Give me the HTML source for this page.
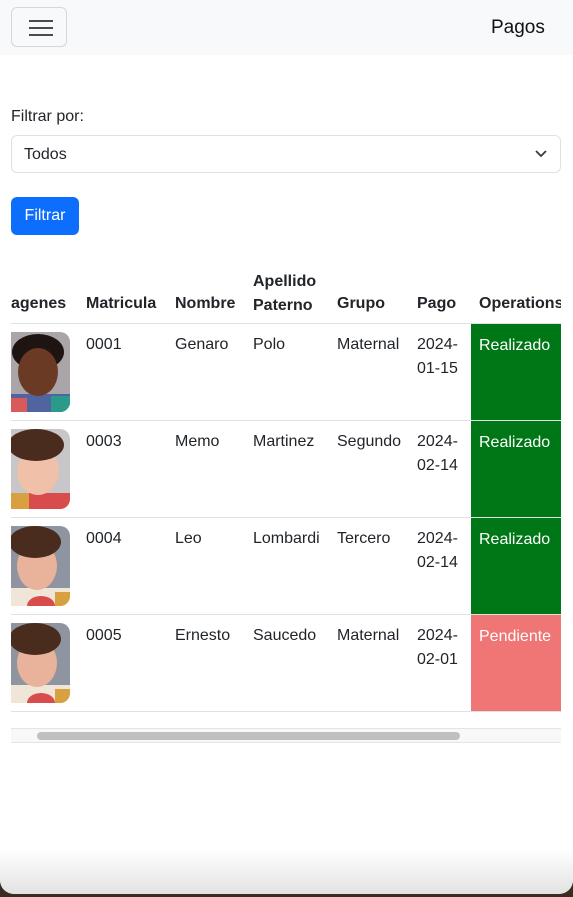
<!DOCTYPE html>
<html><head><meta charset="utf-8"><style>
*{margin:0;padding:0;box-sizing:border-box}
html,body{width:573px;height:897px;overflow:hidden;background:#3a2c22}
body{font-family:"Liberation Sans",Arial,sans-serif;color:#212529;font-size:16px}
#page{position:absolute;left:0;top:0;width:573px;height:894px;background:#fff;border-radius:0 0 14px 14px;overflow:hidden}
#shade{position:absolute;left:0;top:850px;width:573px;height:44px;background:linear-gradient(#fff,#e2e2e2)}
.a{position:absolute;white-space:nowrap}
.nav{position:absolute;left:0;top:0;width:573px;height:55px;background:#f8f9fa}
.tog{position:absolute;left:11px;top:7px;width:56px;height:40px;border:1px solid #d6d7d8;border-radius:6px}
.tog i{position:absolute;left:17px;width:24px;height:2px;background:#4a4a4a}
.sel{position:absolute;left:11px;top:135px;width:550px;height:38px;border:1px solid #dee2e6;border-radius:6px}
.btn{position:absolute;left:11px;top:197px;width:68px;height:38px;background:#0d6efd;border-radius:6px;color:#fff;text-align:center;line-height:38px}
.th{font-weight:bold}
.hl{position:absolute;left:11px;width:550px;height:1px;background:#dee2e6}
.st{position:absolute;left:471px;width:90px;color:#fff;padding:13px 0 0 8px}
.img{position:absolute;left:11px;width:59px;height:80px;border-radius:0 10px 10px 0;overflow:hidden}
.d{line-height:24px}
</style></head><body><div id="page">
<div class="nav"><div class="tog"><i style="top:12px"></i><i style="top:19px"></i><i style="top:26px"></i></div>
<div class="a" style="left:491px;top:17px;font-size:19px;color:#111">Pagos</div></div>
<div class="a" style="left:11px;top:108px;font-size:16px">Filtrar por:</div>
<div class="sel"><div class="a" style="left:12px;top:10px">Todos</div>
<svg class="a" style="left:522px;top:13px" width="14" height="10" viewBox="0 0 14 10"><path d="M2 2l5 5 5-5" fill="none" stroke="#343a40" stroke-width="1.8"/></svg></div>
<div class="btn">Filtrar</div>

<div class="a th" style="left:11px;top:295px">agenes</div>
<div class="a th" style="left:86px;top:295px">Matricula</div>
<div class="a th" style="left:175px;top:295px">Nombre</div>
<div class="a th" style="left:253px;top:270px;line-height:24px">Apellido<br>Paterno</div>
<div class="a th" style="left:337px;top:295px">Grupo</div>
<div class="a th" style="left:417px;top:295px">Pago</div>
<div class="a th" style="left:479px;top:295px;width:82px;overflow:hidden">Operations</div>
<div class="hl" style="top:323px"></div>

<div class="st" style="top:324px;height:96px;background:#007717">Realizado</div>
<div class="st" style="top:421px;height:96px;background:#007717">Realizado</div>
<div class="st" style="top:518px;height:96px;background:#007717">Realizado</div>
<div class="st" style="top:615px;height:96px;background:#f07575">Pendiente</div>
<div class="hl" style="top:420px"></div><div class="hl" style="top:517px"></div><div class="hl" style="top:614px"></div><div class="hl" style="top:711px"></div>

<div class="img" style="top:332px"><svg width="59" height="80"><rect width="59" height="80" fill="#a9a5a8"/><rect y="62" width="59" height="18" fill="#5064a0"/><rect x="40" y="64" width="19" height="16" fill="#2a9a8a"/><rect y="66" width="16" height="14" fill="#d85a5a"/><ellipse cx="27" cy="20" rx="26" ry="18" fill="#1e1512"/><ellipse cx="27" cy="40" rx="20" ry="24" fill="#6b3a25"/></svg></div>
<div class="img" style="top:429px"><svg width="59" height="80"><rect width="59" height="80" fill="#c8c6c9"/><rect y="64" width="59" height="16" fill="#d84c4c"/><rect y="64" width="18" height="16" fill="#d8a040"/><ellipse cx="27" cy="42" rx="21" ry="24" fill="#f0c0a8"/><ellipse cx="25" cy="16" rx="28" ry="16" fill="#4a2c1e"/></svg></div>
<div class="img" style="top:526px"><svg width="59" height="80"><rect width="59" height="80" fill="#8f95a0"/><rect y="62" width="59" height="18" fill="#efe6d8"/><ellipse cx="30" cy="80" rx="14" ry="10" fill="#d84c4c"/><rect x="44" y="66" width="15" height="14" fill="#d8a040"/><ellipse cx="26" cy="40" rx="20" ry="24" fill="#e8b39a"/><ellipse cx="24" cy="16" rx="26" ry="16" fill="#4a2c1e"/></svg></div>
<div class="img" style="top:623px"><svg width="59" height="80"><rect width="59" height="80" fill="#8f95a0"/><rect y="62" width="59" height="18" fill="#efe6d8"/><ellipse cx="30" cy="80" rx="14" ry="10" fill="#d84c4c"/><rect x="44" y="66" width="15" height="14" fill="#d8a040"/><ellipse cx="26" cy="40" rx="20" ry="24" fill="#e8b39a"/><ellipse cx="24" cy="16" rx="26" ry="16" fill="#4a2c1e"/></svg></div>

<div class="a" style="left:86px;top:336px">0001</div><div class="a" style="left:175px;top:336px">Genaro</div><div class="a" style="left:253px;top:336px">Polo</div><div class="a" style="left:337px;top:336px">Maternal</div><div class="a d" style="left:417px;top:333px">2024-<br>01-15</div>
<div class="a" style="left:86px;top:433px">0003</div><div class="a" style="left:175px;top:433px">Memo</div><div class="a" style="left:253px;top:433px">Martinez</div><div class="a" style="left:337px;top:433px">Segundo</div><div class="a d" style="left:417px;top:430px">2024-<br>02-14</div>
<div class="a" style="left:86px;top:530px">0004</div><div class="a" style="left:175px;top:530px">Leo</div><div class="a" style="left:253px;top:530px">Lombardi</div><div class="a" style="left:337px;top:530px">Tercero</div><div class="a d" style="left:417px;top:527px">2024-<br>02-14</div>
<div class="a" style="left:86px;top:627px">0005</div><div class="a" style="left:175px;top:627px">Ernesto</div><div class="a" style="left:253px;top:627px">Saucedo</div><div class="a" style="left:337px;top:627px">Maternal</div><div class="a d" style="left:417px;top:624px">2024-<br>02-01</div>

<div class="a" style="left:11px;top:728px;width:550px;height:15px;background:#f8f8f8;border-top:1px solid #e4e4e4;border-bottom:1px solid #e4e4e4"></div>
<div class="a" style="left:37px;top:732px;width:423px;height:8px;background:#c0c0c0;border-radius:4px"></div>
<div id="shade"></div>
</div></body></html>
